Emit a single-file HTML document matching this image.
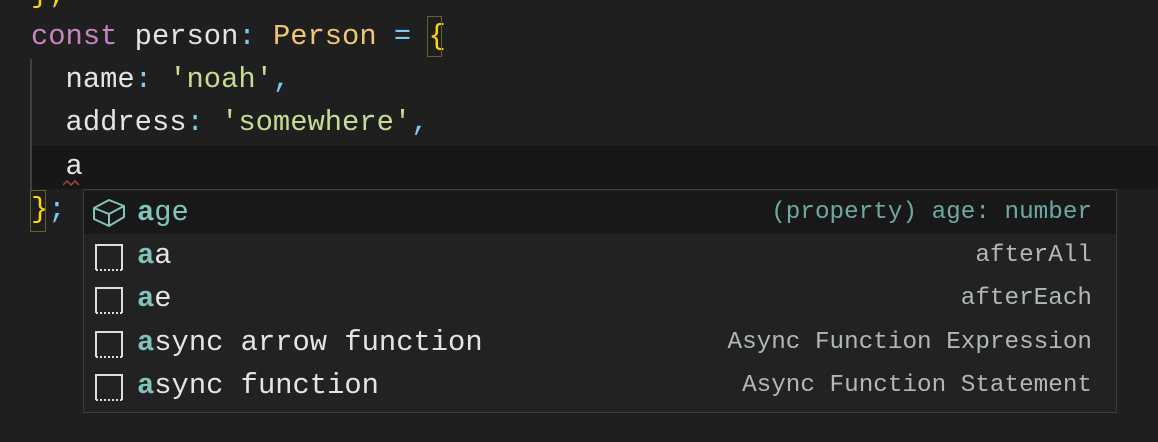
<!DOCTYPE html><html><head><style>
body{margin:0;width:1158px;height:442px;background:#1f1f1f;overflow:hidden;position:relative;font-family:"Liberation Mono",monospace;font-size:28.8px;color:#e4e4e4}
.l{position:absolute;left:31px;height:43px;line-height:43px;white-space:pre}
.k{color:#c586c0}.t{color:#f0c674}.o{color:#7fc8f0}.s{color:#c5dd93}.y{color:#ffd700}
.pop{position:absolute;left:83px;top:189px;width:1032px;height:222px;background:#222222;border:1px solid #3c3c3c}
.r{position:absolute;left:0;width:1032px;height:43px;line-height:43px;white-space:pre}
.r .a{position:absolute;left:53px;color:#e4e4e4}.r b{color:#80c4bc;font-weight:bold}
.r .d{position:absolute;right:24px;font-size:24.3px;color:#b0b8b6}
.ic{position:absolute;left:10px;top:8px;width:30px;height:30px}
</style></head><body>
<div class="l y" style="top:-27px">};</div>
<div class="l" style="top:15px"><span class="k">const</span> person<span class="o">:</span> <span class="t">Person</span> <span class="o">=</span> <span class="y">{</span></div>
<div style="position:absolute;left:427px;top:16px;width:15px;height:41px;border:1px solid #6b5e2a;box-sizing:border-box"></div>
<div style="position:absolute;left:30px;top:59px;width:2px;height:131px;background:#404040"></div>
<div class="l" style="top:58px">  name<span class="o">:</span> <span class="s">'noah'</span><span class="o">,</span></div>
<div class="l" style="top:101px">  address<span class="o">:</span> <span class="s">'somewhere'</span><span class="o">,</span></div>
<div style="position:absolute;left:32px;top:146px;width:1126px;height:43px;background:#171717"></div>
<div class="l" style="top:145px">  a</div>
<svg style="position:absolute;left:63px;top:180px" width="18" height="7"><path d="M0 5 L4 1 L8 5 L12 1 L16 5" stroke="#a04848" stroke-width="1.5" fill="none"/></svg>
<div class="l" style="top:188px"><span class="y">}</span><span class="o">;</span></div>
<div style="position:absolute;left:30px;top:190px;width:16px;height:42px;border:1px solid #6b5e2a;box-sizing:border-box"></div>
<div class="pop">
<div class="r" style="top:1px;background:#181818"><svg style="position:absolute;left:8px;top:6px" width="34" height="32" viewBox="0 0 34 32"><path d="M2 11 L17 3 L32 9 L32 20 L17 29 L2 22 Z M2 11 L17 17 L32 9 M17 17 L17 29" stroke="#80c4bc" stroke-width="2" fill="none" stroke-linejoin="round"/></svg><span class="a" style="color:#80c4bc"><b>a</b>ge</span><span class="d" style="color:#6fa8a2">(property) age: number</span></div>
<div class="r" style="top:44px"><svg class="ic" viewBox="0 0 30 30"><path d="M2 28 V3 H28 V28" stroke="#ddd" stroke-width="2" fill="none"/><path d="M2 28 H28" stroke="#ddd" stroke-width="2" stroke-dasharray="2 2"/></svg><span class="a"><b>a</b>a</span><span class="d">afterAll</span></div>
<div class="r" style="top:87px"><svg class="ic" viewBox="0 0 30 30"><path d="M2 28 V3 H28 V28" stroke="#ddd" stroke-width="2" fill="none"/><path d="M2 28 H28" stroke="#ddd" stroke-width="2" stroke-dasharray="2 2"/></svg><span class="a"><b>a</b>e</span><span class="d">afterEach</span></div>
<div class="r" style="top:131px"><svg class="ic" viewBox="0 0 30 30"><path d="M2 28 V3 H28 V28" stroke="#ddd" stroke-width="2" fill="none"/><path d="M2 28 H28" stroke="#ddd" stroke-width="2" stroke-dasharray="2 2"/></svg><span class="a"><b>a</b>sync arrow function</span><span class="d">Async Function Expression</span></div>
<div class="r" style="top:174px"><svg class="ic" viewBox="0 0 30 30"><path d="M2 28 V3 H28 V28" stroke="#ddd" stroke-width="2" fill="none"/><path d="M2 28 H28" stroke="#ddd" stroke-width="2" stroke-dasharray="2 2"/></svg><span class="a"><b>a</b>sync function</span><span class="d">Async Function Statement</span></div>
</div>
</body></html>
